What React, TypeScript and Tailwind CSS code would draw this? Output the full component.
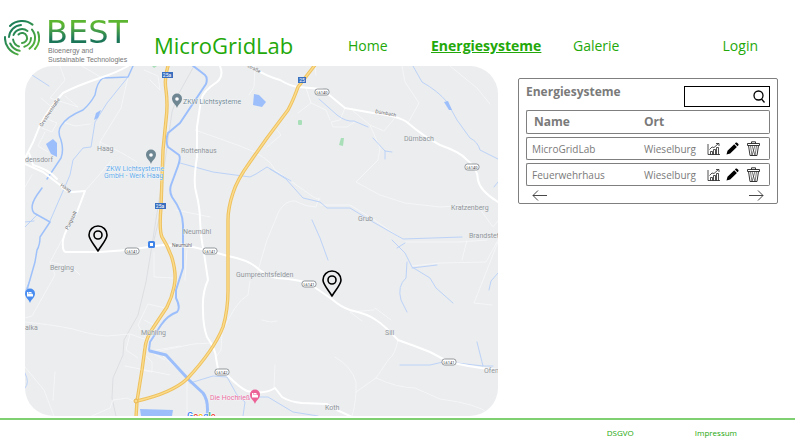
import React from "react";

const roads = [
  "M128 66Q118 72 100 78Q76 86 63 93Q50 107 40 125Q34 142 25 158",
  "M29 153L33 165Q48 169 57 179M25 164L43 172L60 185Q66 192 73 192L85 191L77 212Q65 230 63 240Q62 252 66 252L100 252L127 250L163 245L193 247L210 251L228 256Q248 260 256 267Q266 276 277 278Q302 280 310 284L333 300Q341 307 350 310Q368 314 376 320Q384 325 398 340Q415 346 430 352L447 361Q467 367 498 370",
  "M220 66Q224 76 217 82Q203 91 201 100L197 127L197 157Q193 182 196 192Q200 208 200 220Q201 240 204 253L208 280Q202 293 203 310Q203 326 207 337Q216 350 216 358L218 369L227 375Q240 388 247 391Q264 395 275 388L282 397Q290 402 302 403L327 404L337 410L352 417",
  "M250 65Q262 75 280 80Q290 86 298 87L322 89L345 108L373 113Q400 116 408 123Q423 136 440 145Q460 152 466 159Q478 168 478 180Q480 191 498 202",
];

const lanes = [
  "M82 66L102 78M60 66L65 80L50 98L78 107L65 96M41 98L55 110M45 118L57 123L52 132L42 128M45 132L38 146L48 152M63 122L75 126L90 124",
  "M128 77L121 108L100 142L122 153L137 162M100 142V152M150 80L160 90L158 76L144 70",
  "M85 191L112 160M63 238L50 262L55 275L32 316L25 318M50 262L72 267L80 275M32 175L25 187",
  "M25 322Q55 325 73 329Q92 335 107 336L130 334L147 340M147 340L138 325L148 304L165 308M144 320L156 326M130 334L126 350L138 358M125 366L170 375M145 355L152 362V372L142 370M150 351L180 346",
  "M113 400L127 398L137 403M113 400L110 408L92 416M25 367L44 390L54 416",
  "M195 130L215 137L240 146Q270 157 275 170L312 196Q318 200 320 199M257 274L267 240L279 211Q286 200 295 201Q306 207 316 207L319 198",
  "M255 66L254 87L249 95M306 88L311 103L326 110L330 120M311 103L298 113M267 147L281 135L277 130",
  "M402 66L405 82L419 103L408 123M345 108L340 120L331 122L333 127L347 127L356 121M353 111L370 125L384 131L394 119M370 125L380 148L378 160L356 182L380 195L405 203L440 207L470 205",
  "M320 205L350 205L373 219L402 239M480 209L493 227L498 221M467 240L462 260M498 240L486 262L440 263L412 266M405 242L460 242M498 242L474 303L492 305M374 310L350 312L362 321M375 308L391 320",
  "M398 340Q395 355 389 359Q380 372 376 378L356 392Q355 408 352 416M376 378Q398 388 415 388L440 399Q478 404 488 413M335 357Q352 367 356 382L356 392",
  "M160 351L193 344L212 343M222 333L221 350L216 357M222 333Q235 302 248 295L250 281M187 377V416M163 356L187 378M176 210L210 217M154 252V277L173 278M187 250L185 280M275 365L274 388M315 66L316 75M262 320L270 322L277 321",
  "M450 66L477 88L490 104M460 242L487 240M165 360L147 350M55 372L53 400",
];

const streams = [
  "M128 77L107 103L95 122L91 147L83 148L73 160L70 175L50 221M32 75L49 86M37 215L25 227M25 222L34 221",
  "M180 163L213 172L250 177L256 174L267 167L291 181M270 169L286 179L303 198L320 202L327 208L350 208L373 222L403 239L462 237",
  "M413 66L422 82Q438 91 447 102L457 120L470 138Q478 142 480 150L498 159",
  "M319 99L337 115Q346 122 354 121L368 127M373 138L385 151L392 152M385 151L385 159M498 182L494 187",
  "M312 220L320 238L328 260M392 240L405 253L412 267L430 278L436 288L453 303M407 262L406 278Q397 286 401 300L407 312M412 268L437 265M405 243L397 248",
  "M400 365L430 365L443 362L457 363L483 366L477 342M483 366L493 366M498 273L491 281L489 290",
  "M190 383L213 376L227 377L237 395L245 402L243 416M243 397L268 397L293 412L318 416",
  "M25 373Q30 383 25 388M30 280L25 292",
];

const yellow = [
  "M168 66Q164 78 166 90Q168 105 166 120L163 150L161 207Q159 230 162 237Q168 246 172 258Q177 275 174 287Q172 297 167 307L153 328Q146 338 145 348L142 370L137 401L136 417",
  "M315 65L298 87Q293 101 288 110L267 138L250 162Q237 180 233 193Q228 208 228 220L228 290Q228 310 223 327Q214 350 187 379Q172 393 137 401",
];

const labels: [number, number, string][] = [
  [97, 151, "Haag"],
  [25, 162, "densdorf"],
  [181, 153, "Rottenhaus"],
  [404, 141, "Dürnbach"],
  [451, 210, "Kratzenberg"],
  [358, 221, "Grub"],
  [469, 238, "Brandstet"],
  [183, 234, "Neumühl"],
  [50, 270, "Berging"],
  [236, 277, "Gumprechtsfelden"],
  [141, 335, "Mühling"],
  [385, 335, "Sill"],
  [484, 373, "Ofen"],
  [325, 410, "Koth"],
  [25, 330, "aika"],
];

const shields: [number, number, string][] = [
  [322, 92, "L6140"],
  [472, 167, "L6140"],
  [132, 251, "L6141"],
  [210, 251, "L6141"],
  [309, 284, "L6141"],
  [449, 362, "L6141"],
  [222, 372, "L6142"],
];

function MapPicture() {
  return (
    <svg viewBox="25 66 473 350" className="block w-full font-[Roboto,sans-serif]" role="img" aria-label="Karte">
      <rect x="25" y="66" width="473" height="350" fill="#ebedef" />
      <g fill="none" strokeLinecap="round" strokeLinejoin="round">
        <g stroke="#dcdee1" strokeWidth="1">
          <path d="M194 66L178 95L172 112L163 175L152 245L146 282L138 315L124 340L123 355L113 378L112 398L116 416M160 215L154 240" />
        </g>
        <g stroke="#f7f8f9" strokeWidth="0.8">
          {lanes.map((d) => <path key={d} d={d} />)}
        </g>
        <g stroke="#bcd2f7" strokeWidth="1">
          {streams.map((d) => <path key={d} d={d} />)}
        </g>
        <path
          d="M133 66L128 77L103 78Q97 82 95 95Q90 104 83 110Q66 117 61 126Q57 131 61 140Q64 150 61 158L47 179M42 188L37 195Q29 207 34 213L50 222L40 237Q40 245 37 250L35 262L27 290"
          stroke="#9fc1fa"
          strokeWidth="1.5"
        />
        <path
          d="M192 65L205 75Q208 78 206 84L180 123L168 133Q165 141 168 147L179 155Q181 158 178 166L171 185Q169 191 172 197Q183 212 183 225L183 268L176 290L176 298Q181 308 177 312Q168 315 161 325L150 342L149 350"
          stroke="#9cbffb"
          strokeWidth="2"
        />
        <path d="M150 351L166 355L189 380L203 393Q209 401 207 417" stroke="#9cbffb" strokeWidth="3" />
        <g stroke="#ffffff" strokeWidth="2">
          {roads.map((d) => <path key={d} d={d} />)}
        </g>
        <g stroke="#eec15f" strokeWidth="3.4">
          {yellow.map((d) => <path key={d} d={d} />)}
        </g>
        <g stroke="#fbdc8c" strokeWidth="1.4">
          {yellow.map((d) => <path key={d} d={d} />)}
        </g>
      </g>
      <circle cx="136" cy="401" r="2" fill="#fbdc8c" stroke="#e8b450" />
      <g fill="#9cbffb">
        <path d="M46 144L53 139L57 143L57 157L51 154Z" />
        <path d="M96 113L101 110L98 118L94 120Z" />
        <path d="M254 94L259 95L266 102L262 107L253 105Z" />
        <path d="M444 102L448 101L452 110L449 110Z" />
        <path d="M140 409L173 410L172 416H141Z" />
      </g>
      <g fill="#a9dfb8">
        <path d="M341 138L344 138L343 146L339 145Z" />
        <rect x="298" y="120" width="4" height="5" rx="1" />
        <path d="M152 66H157L154 68Z" />
      </g>

      <g fontSize="7" fill="#8f9499" stroke="#f1f3f4" strokeWidth="0.6" paintOrder="stroke">
        {labels.map(([x, y, t]) => <text key={t} x={x} y={y}>{t}</text>)}
      </g>
      <g fontSize="5" fill="#5f6368" stroke="#ffffff" strokeWidth="0.6" paintOrder="stroke">
        <text transform="translate(42 127) rotate(-57)">Grestnerstraße</text>
        <text transform="translate(60 186) rotate(33)">Haag</text>
        <text transform="translate(68 230) rotate(-63)">Purgstall</text>
        <text transform="translate(247 67) rotate(26)">straße</text>
        <text transform="translate(375 113) rotate(10)">Dürnbach</text>
        <text x="172" y="247">Neumühl</text>
      </g>

      {shields.map(([x, y, t]) => (
        <g key={`${x}-${y}`}>
          <rect x={x - 7} y={y - 3} width="14" height="6" rx="2.5" fill="#ffffff" stroke="#7b8085" strokeWidth="0.8" />
          <text x={x} y={y + 2} textAnchor="middle" fontSize="4" fill="#3c4043">{t}</text>
        </g>
      ))}
      {([[167, 75, "25a"], [160, 206, "25a"], [302, 80, "25"]] as [number, number, string][]).map(([x, y, t]) => (
        <g key={`${x}-${y}`}>
          <rect x={x - (t === "25" ? 4 : 5)} y={y - 3} width={t === "25" ? 8 : 11} height="6" fill="#3a6fc0" />
          <text x={x} y={y + 2} textAnchor="middle" fontSize="5" fill="#ffffff">{t}</text>
        </g>
      ))}
      <rect x="148" y="241" width="7" height="7" rx="1.5" fill="#3f83e8" />
      <path d="M150 243h3v3h-3z" fill="#ffffff" />

      <g fontSize="7" stroke="#ffffff" strokeWidth="0.6" paintOrder="stroke">
        <text x="183" y="104" fill="#6f8793">ZKW Lichtsysteme</text>
        <text x="106" y="171" fill="#5ba6e6">ZKW Lichtsysteme</text>
        <text x="104" y="178" fill="#5ba6e6">GmbH - Werk Haag</text>
        <text x="210" y="400" fill="#e5679a">Die Hochrieß</text>
      </g>
      {([[177, 108, "#6f8793"], [151, 164, "#6f8793"], [30, 303, "#4a8df0"], [255, 404, "#ec6296"]] as [number, number, string][]).map(([x, y, c]) => (
        <g key={`${x}-${y}`} transform={`translate(${x} ${y})`}>
          <path d="M0 0C-1 -4 -5 -5 -5 -9.5A5 5 0 0 1 5 -9.5C5 -5 1 -4 0 0Z" fill={c} />
          {c === "#6f8793" ? <circle cy="-9" r="1.8" fill="#fff" /> : <path d="M-3 -11h1v1.5h4l1 1v2h-6zM-1.5 -11h3v1h-3z" fill="#fff" />}
        </g>
      ))}
      <text x="187" y="419" fontSize="9" fontWeight="500" stroke="#ffffff" strokeWidth="1" paintOrder="stroke">
        <tspan fill="#4285f4">G</tspan>
        <tspan fill="#ea4335">o</tspan>
        <tspan fill="#fbbc05">o</tspan>
        <tspan fill="#4285f4">g</tspan>
        <tspan fill="#34a853">l</tspan>
        <tspan fill="#ea4335">e</tspan>
      </text>
    </svg>
  );
}

function Pin({ label, place }: { label: string; place: string }) {
  return (
    <button type="button" aria-label={label} className={`absolute -translate-x-1/2 -translate-y-full ${place}`}>
      <svg width="20" height="27" viewBox="0 0 20 27" fill="none" stroke="#000" strokeWidth="1.6" strokeLinejoin="round">
        <path d="M10 26C6.500 20 1 14.500 1 10A9 9 0 0 1 19 10C19 14.500 13.500 20 10 26Z" />
        <circle cx="10" cy="10" r="4" />
      </svg>
    </button>
  );
}

function LogoMark() {
  return (
    <svg width="36" height="36" viewBox="0 0 36 36" fill="none" strokeWidth="2" strokeLinecap="round" aria-hidden="true">
      <defs>
        <linearGradient id="mark" gradientUnits="userSpaceOnUse" x1="4" y1="4" x2="28" y2="32">
          <stop offset="0.2" stopColor="#1f8058" />
          <stop offset="1" stopColor="#5cb838" />
        </linearGradient>
      </defs>
      <g stroke="url(#mark)">
        <path d="M6 6A17 17 0 0 1 28.500 4.600" />
        <path d="M1 17A17 17 0 0 0 13.600 34.400" />
        <path d="M34 12.200A17 17 0 0 1 31 29" />
        <path d="M5 17A13 13 0 0 1 17 5" />
        <path d="M6.200 23.500A13 13 0 0 0 15.700 30.800" />
        <path d="M28 9.600A13 13 0 0 1 25.500 28.600" />
        <path d="M9.500 15A9 9 0 0 1 23.500 11" />
        <path d="M27 18A9 9 0 0 1 20.300 26.700" />
        <path d="M9.100 19.600A9 9 0 0 0 15 26.500" />
        <path d="M14.500 14.500A5 5 0 1 1 18 23" />
      </g>
    </svg>
  );
}

function ChartIcon() {
  return (
    <svg width="13" height="14" viewBox="0 0 13 14" fill="none" stroke="#222" strokeWidth="0.8" aria-hidden="true">
      <path d="M1 2V12.500H13M3.500 12.500V9.500H5.500V12.500M6.500 12.500V7.500H8.500V12.500M9.500 12.500V5.500H11.500V12.500M2.500 7.500L5 5L7 5.500L11.500 1.500M9 1.500H12V4" />
    </svg>
  );
}

function PencilIcon() {
  return (
    <svg width="13" height="13" viewBox="0 0 13 13" fill="#000" aria-hidden="true">
      <path d="M0.500 12.500L1.500 8.800L8.200 2.200L10.900 4.900L4.200 11.500ZM8.900 1.500L9.900 0.600Q10.500 0.200 11.100 0.700L12.400 2Q12.800 2.600 12.400 3.200L11.500 4.200Z" />
    </svg>
  );
}

function TrashIcon() {
  return (
    <svg width="13" height="16" viewBox="0 0 13 16" fill="none" stroke="#222" strokeWidth="0.9" aria-hidden="true">
      <path d="M0.500 4.500V2.500H12.500V4.500ZM4.500 2.500V0.800H8.500V2.500M1.500 4.500L3 14.500H10L11.500 4.500" />
      <path d="M3.500 5L5 14.500M5.200 5L8 14.500M9.500 5L8 14.500M7.800 5L5 14.500" strokeWidth="0.6" />
    </svg>
  );
}

const systems = [
  { name: "MicroGridLab", place: "Wieselburg" },
  { name: "Feuerwehrhaus", place: "Wieselburg" },
];

const edge = "border-y border-[#7f7f7f]";
const first = `${edge} border-l rounded-l-xs`;
const last = `${edge} border-r rounded-r-xs`;

export default function App() {
  return (
    <div className="min-h-screen bg-white font-['Open_Sans','Noto_Sans',sans-serif] text-[#23a80a]">
      <header className="flex h-[66px] items-end">
        <a href="#start" className="flex w-[154px] shrink-0 gap-2 pb-0.5 pl-1">
          <LogoMark />
          <span className="flex flex-col whitespace-nowrap">
            <span className="-ml-0.5 bg-linear-to-b from-[#5cb531] from-20% to-[#1b7658] to-80% bg-clip-text font-['DejaVu_Sans',sans-serif] text-[32px] leading-[24px] text-transparent">
              BEST
            </span>
            <span className="pt-0.5 font-['Liberation_Sans',sans-serif] text-[7px] leading-[9px] text-[#777]">
              Bioenergy and
              <br />
              Sustainable Technologies
            </span>
          </span>
        </a>
        <span className="w-[194px] shrink-0 pb-1.5 text-[22px] leading-[30px]">MicroGridLab</span>
        <nav className="flex flex-1 items-baseline pr-[37px] pb-2.5 text-[14px] leading-[20px]">
          <a href="#home" className="w-[83px]">Home</a>
          <a href="#energiesysteme" aria-current="page" className="w-[142px] font-bold underline">Energiesysteme</a>
          <a href="#galerie">Galerie</a>
          <a href="#login" className="ml-auto">Login</a>
        </nav>
      </header>

      <main className="flex items-start gap-5 pr-[17px] pl-[25px]">
        <section className="relative min-w-0 flex-1 overflow-hidden rounded-[28px]">
          <MapPicture />
          <Pin label="Feuerwehrhaus" place="left-[15.5%] top-[53%]" />
          <Pin label="MicroGridLab" place="left-[65%] top-[66%]" />
        </section>

        <aside className="mt-3 w-[260px] shrink-0 rounded-xs border border-[#7f7f7f] px-[7px] pt-[7px] pb-0.5 text-[#7a7a7a]">
          <div className="flex h-[21px] justify-between">
            <h2 className="text-[12px] leading-[12px] font-bold">Energiesysteme</h2>
            <label className="flex w-[86px] items-center border border-black pr-1">
              <input type="search" aria-label="Suche" className="min-w-0 flex-1 px-1 text-[10px] outline-none" />
              <svg width="12" height="13" viewBox="0 0 12 13" fill="none" stroke="#000" strokeWidth="1.3" aria-hidden="true">
                <circle cx="5.500" cy="5.500" r="4.500" />
                <path d="M8.500 9L11.500 12.500" />
              </svg>
            </label>
          </div>
          <table className="w-full table-fixed border-separate border-spacing-x-0 border-spacing-y-[3px] text-left text-[10px] leading-[14px]">
            <colgroup>
              <col className="w-[118px]" />
              <col className="w-[63px]" />
              <col />
            </colgroup>
            <thead>
              <tr className="h-6 text-[12px]">
                <th className={`${first} py-0 pl-[7px]`}>Name</th>
                <th className={`${edge} p-0`}>Ort</th>
                <th className={`${last} p-0`}><span className="sr-only">Aktionen</span></th>
              </tr>
            </thead>
            <tbody>
              {systems.map((s) => (
                <tr key={s.name} className="h-[23px]">
                  <td className={`${first} py-0 pl-[5px]`}>{s.name}</td>
                  <td className={`${edge} p-0`}>{s.place}</td>
                  <td className={`${last} p-0`}>
                    <div className="flex h-4 items-center gap-1.5">
                      <button type="button" aria-label={`${s.name} Auswertung`}><ChartIcon /></button>
                      <button type="button" aria-label={`${s.name} bearbeiten`}><PencilIcon /></button>
                      <button type="button" aria-label={`${s.name} löschen`} className="ml-0.5"><TrashIcon /></button>
                    </div>
                  </td>
                </tr>
              ))}
            </tbody>
          </table>
          <div className="flex justify-between px-1.5 pt-px">
            <button type="button" aria-label="Zurück">
              <svg width="15" height="11" viewBox="0 0 15 11" fill="none" stroke="#333" strokeWidth="0.9"><path d="M15 5.500H1M6 0.500L1 5.500L6 10.500" /></svg>
            </button>
            <button type="button" aria-label="Weiter">
              <svg width="15" height="11" viewBox="0 0 15 11" fill="none" stroke="#333" strokeWidth="0.9"><path d="M0 5.500H14M9 0.500L14 5.500L9 10.500" /></svg>
            </button>
          </div>
        </aside>
      </main>

      <footer className="mt-0.5 flex justify-end gap-[61px] border-t-2 border-[#7fd070] pt-1.5 pr-[58px] text-[8px] leading-[14px]">
        <a href="#dsgvo">DSGVO</a>
        <a href="#impressum">Impressum</a>
      </footer>
    </div>
  );
}
